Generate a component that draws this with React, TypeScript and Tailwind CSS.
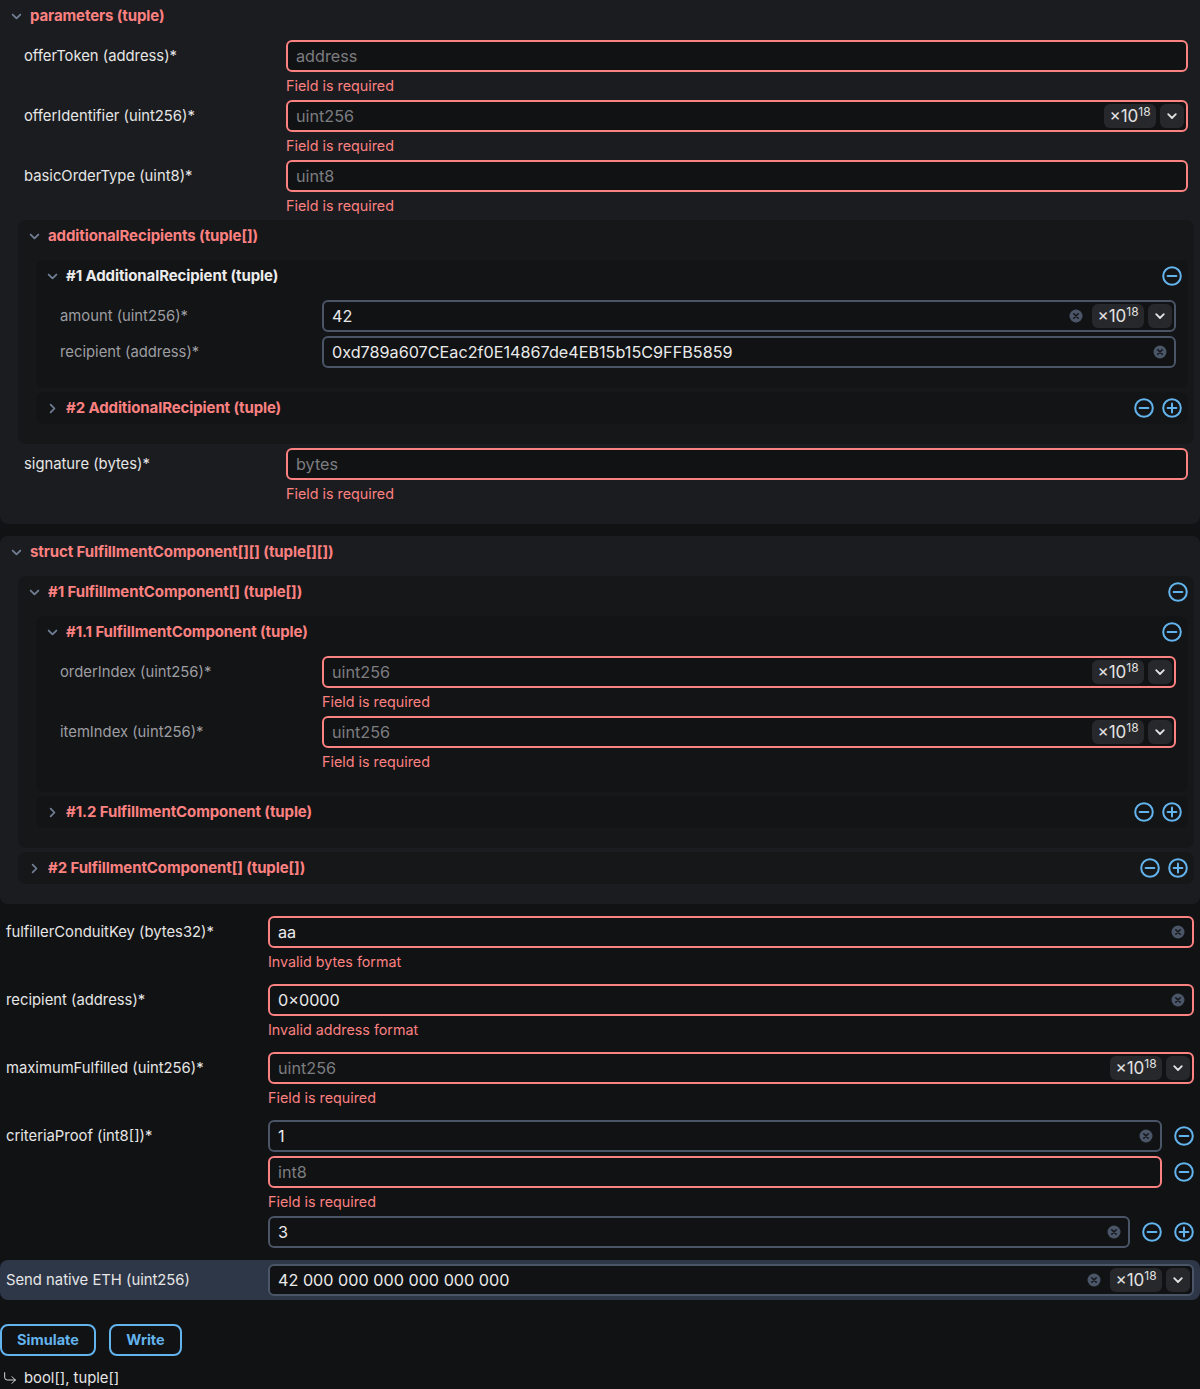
import React from "react";
import clsx from "clsx";
import { CornerDownRight } from "lucide-react";

const RED = "text-[#fc8181]";

function Chevron({ open }: { open: boolean }) {
  return (
    <span className="w-5 h-5 flex items-center justify-center shrink-0">
      <svg width="11" height="11" viewBox="0 0 10 10" fill="none" stroke="#718096" strokeWidth="1.6" strokeLinecap="round" strokeLinejoin="round">
        <path d={open ? "M1.5 3.2l3.5 3.5 3.5-3.5" : "M3.3 1.5l3.5 3.5-3.5 3.5"} />
      </svg>
    </span>
  );
}

function CircleBtn({ kind }: { kind: "minus" | "plus" }) {
  return (
    <svg width="20" height="20" viewBox="0 0 20 20" fill="none" stroke="#63b3ed" strokeWidth="2" strokeLinecap="round" className="shrink-0">
      <circle cx="10" cy="10" r="8.8" />
      <path d="M5.6 10h8.8" />
      {kind === "plus" && <path d="M10 5.6v8.8" />}
    </svg>
  );
}

function ClearIcon() {
  return (
    <svg width="14" height="14" viewBox="0 0 14 14" className="shrink-0">
      <circle cx="7" cy="7" r="6.5" fill="#4a5568" />
      <path d="M4.8 4.8l4.4 4.4M9.2 4.8l-4.4 4.4" stroke="#16171a" strokeWidth="1.6" strokeLinecap="round" />
    </svg>
  );
}

function UnitBadge() {
  return (
    <>
      <span className="h-6 w-[52px] rounded-md bg-[#27282c] flex items-center justify-center text-[#e2e2e2] leading-none">
        <span className="text-[17px]">×10</span>
        <span className="text-[12px] self-start mt-[2px]">18</span>
      </span>
      <span className="w-6 h-6 ml-1 rounded-md bg-[#27282c] flex items-center justify-center">
        <svg width="12" height="12" viewBox="0 0 12 12" fill="none" stroke="#e2e2e2" strokeWidth="1.8" strokeLinecap="round" strokeLinejoin="round">
          <path d="M2.2 4.2L6 8l3.8-3.8" />
        </svg>
      </span>
    </>
  );
}

interface InputProps {
  value?: string;
  placeholder?: string;
  error?: boolean;
  clear?: boolean;
  unit?: boolean;
}

function Input({ value, placeholder, error, clear, unit }: InputProps) {
  return (
    <div
      className={clsx(
        "flex items-center h-8 rounded-md border-2 bg-[#111214] pl-2",
        error ? "border-[#fc8181]" : "border-[#4a5568]",
        unit ? "pr-[2px]" : "pr-[7px]"
      )}
    >
      <span className={clsx("flex-1 text-[16.2px] truncate", value ? "text-[#eaeaea]" : "text-[#7c7d80]")}>
        {value || placeholder}
      </span>
      {clear && (
        <span className={clsx(unit && "mr-[9px]")}>
          <ClearIcon />
        </span>
      )}
      {unit && <UnitBadge />}
    </div>
  );
}

interface FieldProps extends InputProps {
  label: string;
  errorText?: string;
  dim?: boolean;
}

function ErrorText({ children }: { children: React.ReactNode }) {
  return <div className={clsx("mt-1 h-5 text-[14.3px] leading-5", RED)}>{children}</div>;
}

function Field({ label, errorText, dim, ...input }: FieldProps) {
  return (
    <div className="flex px-[6px]">
      <div className={clsx("w-[262px] h-8 flex items-center text-[14.8px] shrink-0", dim ? "text-[#9d9ea2]" : "text-[#e6e6e6]")}>
        {label}
      </div>
      <div className="flex-1 min-w-0">
        <Input {...input} error={input.error ?? !!errorText} />
        {errorText && <ErrorText>{errorText}</ErrorText>}
      </div>
    </div>
  );
}

interface PanelProps {
  title: string;
  open: boolean;
  bg: string;
  valid?: boolean;
  actions?: ("minus" | "plus")[];
  rounded?: string;
  children?: React.ReactNode;
}

function Panel({ title, open, bg, valid, actions = [], rounded = "rounded-lg", children }: PanelProps) {
  return (
    <div className={clsx(bg, rounded, open && "pb-5")}>
      <div className="flex items-center h-8 px-[6px]">
        <Chevron open={open} />
        <span className={clsx("ml-1 text-[15px] font-bold tracking-[-0.1px]", valid ? "text-[#ececec]" : RED)}>{title}</span>
        <div className="ml-auto flex items-center gap-2">
          {actions.map((a, i) => (
            <CircleBtn key={i} kind={a} />
          ))}
        </div>
      </div>
      {open && <div className="mt-2 pl-[18px] pr-[6px] flex flex-col gap-1">{children}</div>}
    </div>
  );
}

function ArrayItem({ input, actions }: { input: InputProps; actions: ("minus" | "plus")[] }) {
  return (
    <div className="flex items-center">
      <div className="flex-1 min-w-0">
        <Input {...input} />
      </div>
      {actions.map((a, i) => (
        <span key={i} className="ml-3">
          <CircleBtn kind={a} />
        </span>
      ))}
    </div>
  );
}

export default function App() {
  return (
    <div className="min-h-[1389px] bg-[#111214] flex flex-col gap-3" style={{ fontFamily: "Inter, 'Noto Sans', sans-serif" }}>
      <Panel title="parameters (tuple)" open bg="bg-[#1b1c1f]" rounded="rounded-b-lg">
        <Field label="offerToken (address)*" placeholder="address" errorText="Field is required" />
        <Field label="offerIdentifier (uint256)*" placeholder="uint256" unit errorText="Field is required" />
        <Field label="basicOrderType (uint8)*" placeholder="uint8" errorText="Field is required" />
        <Panel title="additionalRecipients (tuple[])" open bg="bg-[#161719]">
          <Panel title="#1 AdditionalRecipient (tuple)" open valid bg="bg-[#131416]" actions={["minus"]}>
            <Field label="amount (uint256)*" dim value="42" clear unit />
            <Field label="recipient (address)*" dim value="0xd789a607CEac2f0E14867de4EB15b15C9FFB5859" clear />
          </Panel>
          <Panel title="#2 AdditionalRecipient (tuple)" open={false} bg="bg-[#131416]" actions={["minus", "plus"]} />
        </Panel>
        <Field label="signature (bytes)*" placeholder="bytes" errorText="Field is required" />
      </Panel>

      <Panel title="struct FulfillmentComponent[][] (tuple[][])" open bg="bg-[#1b1c1f]">
        <Panel title="#1 FulfillmentComponent[] (tuple[])" open bg="bg-[#161719]" actions={["minus"]}>
          <Panel title="#1.1 FulfillmentComponent (tuple)" open bg="bg-[#131416]" actions={["minus"]}>
            <Field label="orderIndex (uint256)*" dim placeholder="uint256" unit errorText="Field is required" />
            <Field label="itemIndex (uint256)*" dim placeholder="uint256" unit errorText="Field is required" />
          </Panel>
          <Panel title="#1.2 FulfillmentComponent (tuple)" open={false} bg="bg-[#131416]" actions={["minus", "plus"]} />
        </Panel>
        <Panel title="#2 FulfillmentComponent[] (tuple[])" open={false} bg="bg-[#161719]" actions={["minus", "plus"]} />
      </Panel>

      <Field label="fulfillerConduitKey (bytes32)*" value="aa" clear errorText="Invalid bytes format" />
      <Field label="recipient (address)*" value="0×0000" clear errorText="Invalid address format" />
      <Field label="maximumFulfilled (uint256)*" placeholder="uint256" unit errorText="Field is required" />

      <div className="flex px-[6px]">
        <div className="w-[262px] h-8 flex items-center text-[14.8px] text-[#e6e6e6] shrink-0">criteriaProof (int8[])*</div>
        <div className="flex-1 min-w-0 flex flex-col gap-1">
          <ArrayItem input={{ value: "1", clear: true }} actions={["minus"]} />
          <div>
            <ArrayItem input={{ placeholder: "int8", error: true }} actions={["minus"]} />
            <ErrorText>Field is required</ErrorText>
          </div>
          <ArrayItem input={{ value: "3", clear: true }} actions={["minus", "plus"]} />
        </div>
      </div>

      <div className="flex items-center px-[6px] py-1 bg-[#2d3748] rounded-lg">
        <div className="w-[262px] text-[14.8px] text-[#e6e6e6] shrink-0">Send native ETH (uint256)</div>
        <div className="flex-1 min-w-0">
          <Input value="42 000 000 000 000 000 000" clear unit />
        </div>
      </div>

      <div className="flex gap-[13px] mt-3">
        <button className="h-8 w-[96px] rounded-lg border-2 border-[#63b3ed] text-[#63b3ed] font-bold text-[14.5px]">Simulate</button>
        <button className="h-8 w-[73px] rounded-lg border-2 border-[#63b3ed] text-[#63b3ed] font-bold text-[14.5px]">Write</button>
      </div>

      <div className="flex items-center gap-[6px] h-5 text-[14.8px] text-[#e6e6e6]">
        <CornerDownRight size={16} strokeWidth={1.4} className="ml-[2px]" />
        <span>bool[], tuple[]</span>
      </div>
    </div>
  );
}
